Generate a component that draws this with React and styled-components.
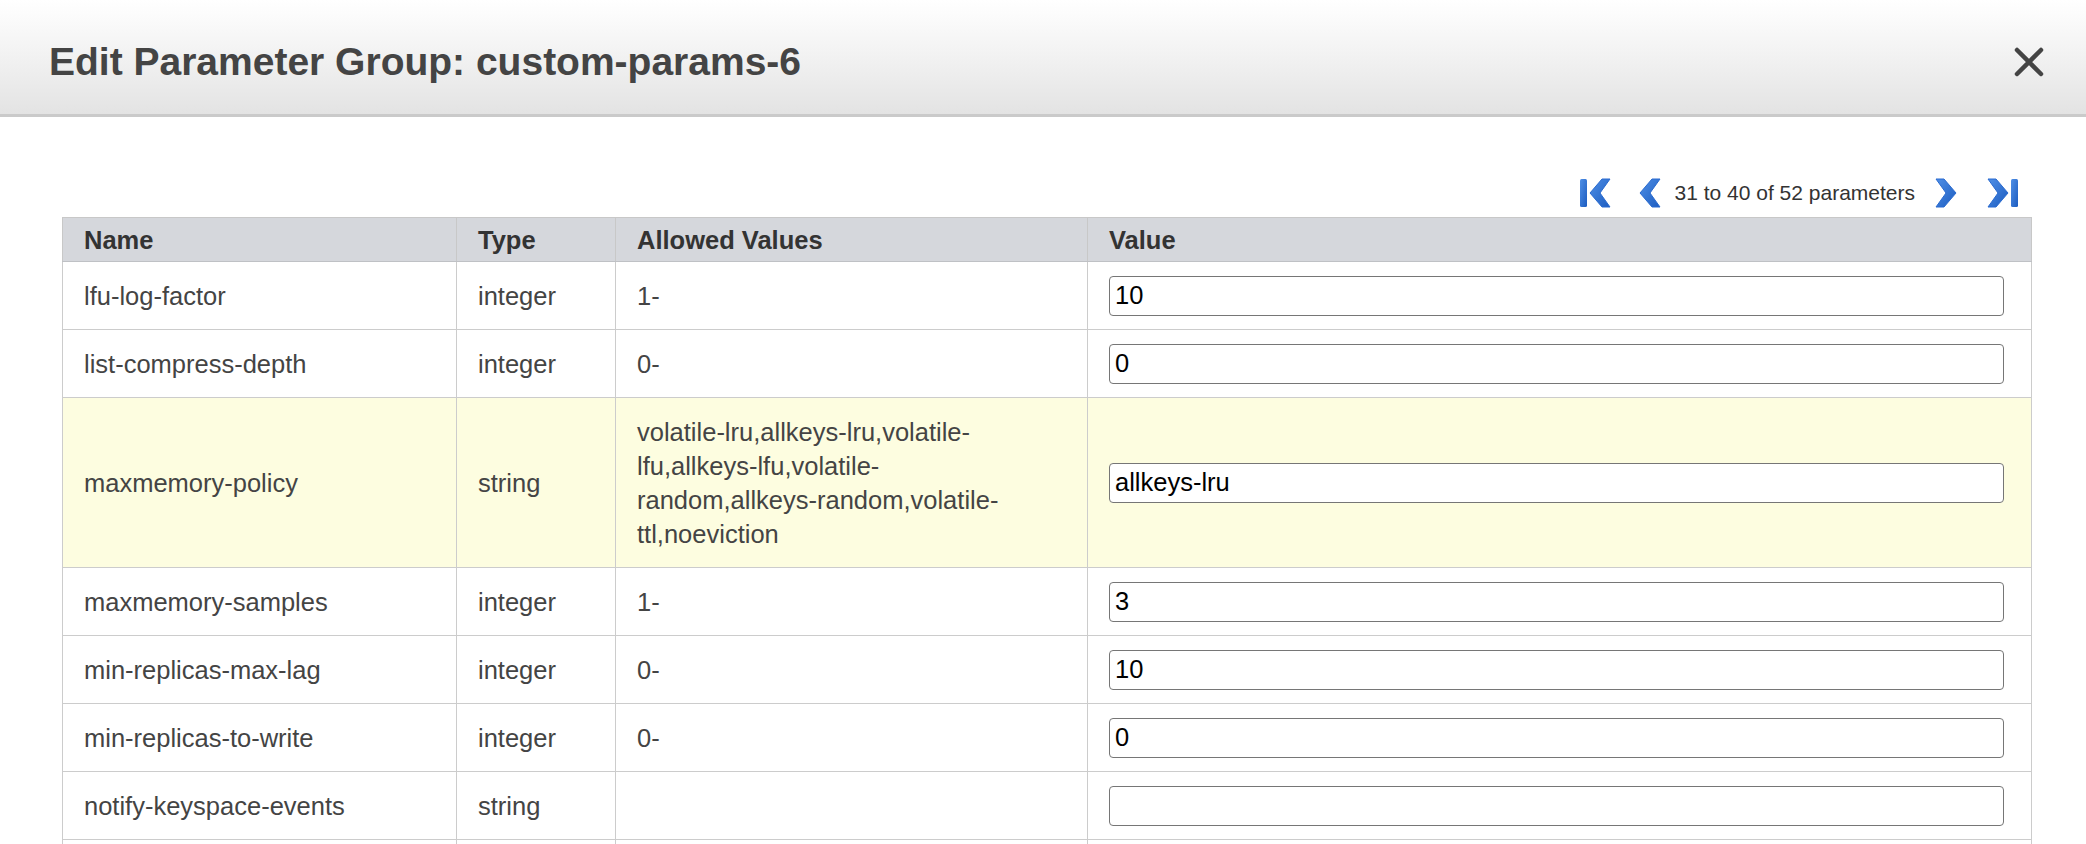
import React from 'react';
import styled, { createGlobalStyle } from 'styled-components';

const GlobalStyle = createGlobalStyle`
    html, body {
        margin: 0;
        padding: 0;
        background: #fff;
        font-family: 'Liberation Sans', Arial, Helvetica, sans-serif;
    }
`;

const Modal = styled.div`
    width: 100%;
    min-height: 844px;
    background: #fff;
`;

const Header = styled.div`
    height: 104px;
    display: flex;
    align-items: center;
    justify-content: space-between;
    padding: 10px 40px 0 49px;
    background: linear-gradient(to bottom, #ffffff 0%, #f3f3f3 45%, #e3e3e3 100%);
    border-bottom: 3px solid #cacaca;
`;

const Title = styled.h1`
    margin: 0;
    font-size: 39px;
    font-weight: bold;
    color: #444;
    letter-spacing: 0;
`;

const CloseButton = styled.button`
    width: 34px;
    height: 34px;
    padding: 0;
    border: none;
    background: transparent;
    display: flex;
    align-items: center;
    justify-content: center;
    cursor: pointer;
`;

const Body = styled.div`
    padding: 59px 54px 0 62px;
`;

const Pager = styled.div`
    display: flex;
    align-items: center;
    justify-content: flex-end;
    height: 34px;
    padding-right: 13px;
    margin-bottom: 7px;
    font-size: 21px;
    color: #333;
`;

const PageButton = styled.span`
    display: flex;
    align-items: center;
    margin: ${p => p.$margin || '0'};
    cursor: pointer;
`;

const Table = styled.table`
    width: 100%;
    border-collapse: collapse;
    table-layout: fixed;
    border: 1px solid #c8c8c8;
    font-size: 25.5px;
    color: #444;
`;

const Th = styled.th`
    background: #d5d7dc;
    text-align: left;
    font-weight: bold;
    color: #333;
    height: 43px;
    padding: 0 21px;
    border: 1px solid #c8c8c8;
    border-bottom: 1px solid #bfc1c5;
    line-height: 34px;
`;

const Row = styled.tr`
    background: ${p => (p.$highlight ? '#fdfde0' : '#fff')};
`;

const Td = styled.td`
    padding: 16.5px 21px;
    border: 1px solid #cccccc;
    line-height: 34px;
    vertical-align: middle;
    word-wrap: break-word;
`;

const AllowedTd = styled(Td)`
    padding-right: 52px;
`;

const ValueTd = styled(Td)`
    padding: 0 27px 0 21px;
`;

const ValueInput = styled.input`
    display: block;
    width: 100%;
    height: 40px;
    box-sizing: border-box;
    padding: 0 5px;
    border: 1px solid #767676;
    border-radius: 4px;
    background: #fff;
    font-family: 'Liberation Sans', Arial, sans-serif;
    font-size: 25.5px;
    color: #000;
    outline: none;
`;

const blue = (
    <linearGradient id="pg" x1="0" y1="0" x2="1" y2="1">
        <stop offset="0" stopColor="#4f8fe6" />
        <stop offset="1" stopColor="#1c5cc0" />
    </linearGradient>
);

const Chevron = ({ dir = 'left', bar = false }) => {
    const left = dir === 'left';
    const chev = left ? '20,0 10,14 20,28 12,28 0,14 12,0' : '0,0 10,14 0,28 8,28 20,14 8,0';
    return (
        <svg width={bar ? 32 : 22} height="30" viewBox={bar ? '-1 -1 32 30' : '-1 -1 22 30'}>
            <defs>{blue}</defs>
            {bar && left && <rect x="0" y="0" width="7" height="28" rx="1.5" fill="url(#pg)" />}
            <polygon
                points={chev}
                transform={bar && left ? 'translate(10,0)' : undefined}
                fill="url(#pg)"
                strokeLinejoin="round"
                stroke="#2a6bd0"
                strokeWidth="1"
            />
            {bar && !left && <rect x="23" y="0" width="7" height="28" rx="1.5" fill="url(#pg)" />}
        </svg>
    );
};

const rows = [
    { name: 'lfu-log-factor', type: 'integer', allowed: '1-', value: '10' },
    { name: 'list-compress-depth', type: 'integer', allowed: '0-', value: '0' },
    {
        name: 'maxmemory-policy',
        type: 'string',
        allowed: 'volatile-lru,allkeys-lru,volatile-lfu,allkeys-lfu,volatile-random,allkeys-random,volatile-ttl,noeviction',
        value: 'allkeys-lru',
        highlight: true,
    },
    { name: 'maxmemory-samples', type: 'integer', allowed: '1-', value: '3' },
    { name: 'min-replicas-max-lag', type: 'integer', allowed: '0-', value: '10' },
    { name: 'min-replicas-to-write', type: 'integer', allowed: '0-', value: '0' },
    { name: 'notify-keyspace-events', type: 'string', allowed: '', value: '' },
    { name: 'set-max-intset-entries', type: 'integer', allowed: '0-', value: '512' },
];

const App = () => {
    return (
        <Modal>
            <GlobalStyle />
            <Header>
                <Title>Edit Parameter Group: custom-params-6</Title>
                <CloseButton aria-label="close">
                    <svg width="30" height="30" viewBox="0 0 30 30">
                        <path d="M3 3 L27 27 M27 3 L3 27" stroke="#444" strokeWidth="4.5" strokeLinecap="round" />
                    </svg>
                </CloseButton>
            </Header>
            <Body>
                <Pager>
                    <PageButton $margin="0 28px 0 0">
                        <Chevron dir="left" bar />
                    </PageButton>
                    <PageButton $margin="0 14px 0 0">
                        <Chevron dir="left" />
                    </PageButton>
                    <span>31 to 40 of 52 parameters</span>
                    <PageButton $margin="0 30px 0 20px">
                        <Chevron dir="right" />
                    </PageButton>
                    <PageButton>
                        <Chevron dir="right" bar />
                    </PageButton>
                </Pager>
                <Table>
                    <colgroup>
                        <col style={{ width: '394px' }} />
                        <col style={{ width: '159px' }} />
                        <col style={{ width: '472px' }} />
                        <col />
                    </colgroup>
                    <thead>
                        <tr>
                            <Th>Name</Th>
                            <Th>Type</Th>
                            <Th>Allowed Values</Th>
                            <Th>Value</Th>
                        </tr>
                    </thead>
                    <tbody>
                        {rows.map(r => (
                            <Row key={r.name} $highlight={r.highlight}>
                                <Td>{r.name}</Td>
                                <Td>{r.type}</Td>
                                <AllowedTd>{r.allowed}</AllowedTd>
                                <ValueTd>
                                    <ValueInput type="text" defaultValue={r.value} />
                                </ValueTd>
                            </Row>
                        ))}
                    </tbody>
                </Table>
            </Body>
        </Modal>
    );
};

export default App;
